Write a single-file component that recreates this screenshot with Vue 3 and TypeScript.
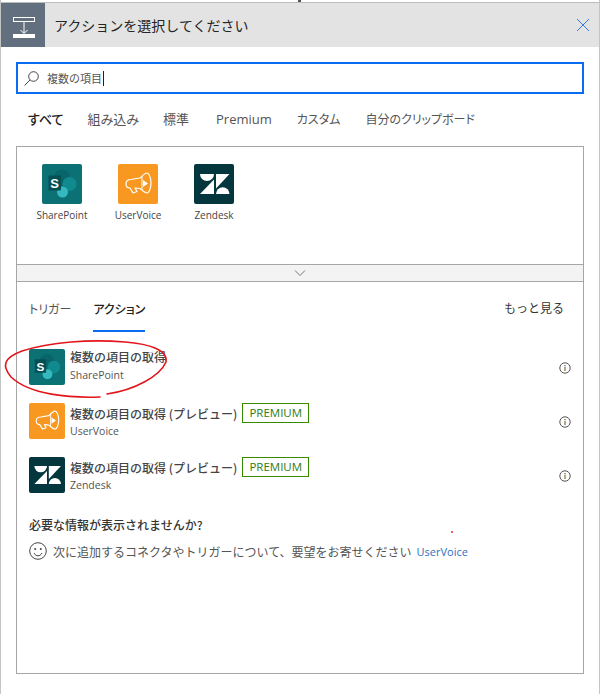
<script setup lang="ts">
interface Connector { name: string; kind: 'sp' | 'uv' | 'zd' }
interface ActionRow { title: string; connector: Connector; premium: boolean }

const sp: Connector = { name: 'SharePoint', kind: 'sp' }
const uv: Connector = { name: 'UserVoice', kind: 'uv' }
const zd: Connector = { name: 'Zendesk', kind: 'zd' }

const connectors: Connector[] = [sp, uv, zd]
const tabs = ['すべて', '組み込み', '標準', 'Premium', 'カスタム', '自分のクリップボード']
const rows: ActionRow[] = [
  { title: '複数の項目の取得', connector: sp, premium: false },
  { title: '複数の項目の取得 (プレビュー)', connector: uv, premium: true },
  { title: '複数の項目の取得 (プレビュー)', connector: zd, premium: true },
]
</script>

<template>
  <div class="page">
    <svg class="defs" width="0" height="0" aria-hidden="true">
      <symbol id="logo-sp" viewBox="0 0 40 40">
        <circle cx="20" cy="13.500" r="8" fill="#08656a" />
        <circle cx="27.500" cy="20" r="7" fill="#118a8e" />
        <circle cx="20.500" cy="28" r="5.500" fill="#35b8be" />
        <rect x="6.500" y="11.500" width="12.500" height="15" rx="1" fill="#034f54" />
      </symbol>
      <symbol id="logo-uv" viewBox="0 0 40 40">
        <path d="M8 20C8 17 10 15.500 13 15.500L22 14C25 11 28 9 29 9C31 9 33 14 33 19C33 24 31 29 29 29C27 29 25 27 22 24.500L17 24L19 27.500L15 29L12 24C9 24 8 22.500 8 20z" fill="none" stroke="#fff" stroke-width="1.200" stroke-linejoin="round" />
        <path d="M24 12v14" stroke="#fff" stroke-width="1" fill="none" />
        <path d="M25 16v7l5-3.500z" fill="#fff" />
      </symbol>
      <symbol id="logo-zd" viewBox="0 0 40 40">
        <path d="M6 10h14a7 7 0 0 1-14 0z" fill="#fff" />
        <path d="M20 15.500V30H6z" fill="#fff" />
        <path d="M22 10h13.500L22 24.500z" fill="#fff" />
        <path d="M22 30a6.750 6.750 0 0 1 13.500 0z" fill="#fff" />
      </symbol>
    </svg>

    <header class="head">
      <div class="head-icon">
        <svg width="44" height="44" viewBox="0 0 44 44">
          <rect x="12.500" y="14.500" width="21" height="4" fill="none" stroke="#fff" />
          <path d="M23 19v11M19.500 27l3.500 3.500 3.500-3.500" fill="none" stroke="#fff" />
          <rect x="12" y="31" width="22" height="4" fill="#fff" />
        </svg>
      </div>
      <div class="head-title">アクションを選択してください</div>
      <svg class="close" width="14" height="14" viewBox="0 0 14 14">
        <path d="M1 1l12 12M13 1L1 13" stroke="#3b78e7" stroke-width="1" fill="none" />
      </svg>
    </header>

    <div class="search">
      <svg width="17" height="17" viewBox="0 0 17 17">
        <circle cx="10.500" cy="6.500" r="4.800" fill="none" stroke="#444" />
        <path d="M7 10l-5.500 5.500" stroke="#444" fill="none" />
      </svg>
      <span class="search-text">複数の項目</span><span class="caret"></span>
    </div>

    <nav class="tabs">
      <span v-for="(t, i) in tabs" :key="t" class="tab" :class="{ on: i === 0 }">{{ t }}</span>
    </nav>

    <section class="panel">
      <div class="conn-grid">
        <div v-for="c in connectors" :key="c.name" class="conn">
          <div class="logo big" :class="c.kind">
            <svg width="40" height="40" viewBox="0 0 40 40">
              <use :href="`#logo-${c.kind}`" />
              <text v-if="c.kind === 'sp'" x="12.700" y="24" class="s-letter">S</text>
            </svg>
          </div>
          <div class="conn-name">{{ c.name }}</div>
        </div>
      </div>

      <div class="collapse">
        <svg width="12" height="8" viewBox="0 0 12 8">
          <path d="M1 1.500l5 5 5-5" fill="none" stroke="#777" />
        </svg>
      </div>

      <div class="sub-tabs">
        <span class="sub-tab">トリガー</span>
        <span class="sub-tab on">アクション</span>
        <span class="more">もっと見る</span>
      </div>

      <ul class="rows">
        <li v-for="r in rows" :key="r.connector.name" class="row">
          <div class="logo small" :class="r.connector.kind">
            <svg width="36" height="36" viewBox="0 0 40 40">
              <use :href="`#logo-${r.connector.kind}`" />
              <text v-if="r.connector.kind === 'sp'" x="12.700" y="24" class="s-letter">S</text>
            </svg>
          </div>
          <div class="row-text" :class="{ plain: !r.premium }">
            <div class="row-title">
              <span>{{ r.title }}</span>
              <span v-if="r.premium" class="badge">PREMIUM</span>
            </div>
            <div class="row-sub">{{ r.connector.name }}</div>
          </div>
          <svg class="info" width="12" height="12" viewBox="0 0 12 12">
            <circle cx="6" cy="6" r="5.200" fill="none" stroke="#555" />
            <path d="M6 5v4" stroke="#8a6a30" stroke-width="1.200" />
            <path d="M6 3v1.200" stroke="#555" stroke-width="1.200" />
          </svg>
        </li>
      </ul>

      <div class="missing">
        <div class="missing-title">必要な情報が表示されませんか?</div>
        <div class="missing-line">
          <svg width="18" height="18" viewBox="0 0 18 18">
            <circle cx="9" cy="9" r="8.300" fill="none" stroke="#444" />
            <circle cx="6.200" cy="7" r="1" fill="#444" />
            <circle cx="11.800" cy="7" r="1" fill="#444" />
            <path d="M5 11c1 2 2.500 2.800 4 2.800s3-.8 4-2.800" fill="none" stroke="#444" />
          </svg>
          <span>次に追加するコネクタやトリガーについて、要望をお寄せください</span>
          <a class="link">UserVoice</a>
        </div>
      </div>
    </section>

    <svg class="scribble" width="600" height="694" viewBox="0 0 600 694">
      <path d="M100 397C70 398 30 395 11 377C2 366 3 358 22 351C50 342 90 339 125 342C150 344 168 350 166 362C160 376 135 390 107 394" fill="none" stroke="#e2161c" stroke-width="1.600" stroke-linecap="round" />
      <circle cx="452" cy="532" r="0.900" fill="#e2161c" />
      <rect x="298" y="0" width="3" height="2" fill="#555" />
    </svg>
  </div>
</template>

<style>
html, body { margin: 0; background: #fff; }
</style>

<style scoped>
.page {
  position: relative;
  width: 600px;
  height: 694px;
  box-sizing: border-box;
  padding-top: 2px;
  overflow: hidden;
  background: #fff;
  color: #333;
  font-family: "Noto Sans CJK JP", "Liberation Sans", sans-serif;
  border-left: 1px solid #c4c4c4;
  border-right: 1px solid #c4c4c4;
}
.defs { position: absolute; }
.head {
  display: flex;
  align-items: center;
  height: 45px;
  background: #e3e3e3;
  border-top: 1px solid #bcbcbc;
  box-sizing: border-box;
}
.head-icon {
  width: 44px;
  height: 44px;
  background: #626f7e;
  flex: none;
}
.head-icon svg { display: block; }
.head-title {
  margin-left: 9px;
  font-size: 14px;
  color: #252525;
  flex: 1;
}
.close { margin-right: 9px; }
.search {
  display: flex;
  align-items: center;
  margin: 15px 15px 0;
  width: 568px;
  height: 32px;
  box-sizing: border-box;
  border: 2px solid #0a6cf0;
  padding-left: 5px;
}
.search-text {
  margin-left: 7px;
  font-size: 11px;
  color: #555;
}
.caret {
  display: inline-block;
  width: 1px;
  height: 15px;
  margin-left: 1px;
  background: #222;
}
.tabs {
  display: flex;
  margin: 12px 0 0 27px;
  height: 25px;
  align-items: center;
  font-feature-settings: "palt";
}
.tab {
  font-size: 13px;
  color: #555;
  margin-right: 24px;
  line-height: 20px;
}
.tab:nth-child(1) { color: #222; font-weight: 500; }
.tab:nth-child(4) { margin-left: 3px; margin-right: 25px; font-family: "Open Sans", "Liberation Sans", sans-serif; }
.tab:nth-child(5), .tab:nth-child(6) { font-size: 12px; }
.tab:nth-child(5) { margin-right: 25px; }
.panel {
  margin: 15px 15px 0;
  width: 568px;
  height: 528px;
  box-sizing: border-box;
  border: 1px solid #a6a6a6;
  display: flex;
  flex-direction: column;
}
.conn-grid {
  display: flex;
  height: 117px;
  flex: none;
  padding: 17px 0 0 18px;
  box-sizing: border-box;
  gap: 22px;
}
.conn {
  display: flex;
  flex-direction: column;
  align-items: center;
  width: 54px;
}
.conn-name {
  margin-top: 3px;
  font-family: "Open Sans", "Liberation Sans", sans-serif;
  font-size: 10px;
  line-height: 16px;
  color: #444;
}
.logo {
  display: flex;
  align-items: center;
  justify-content: center;
  border-radius: 2px;
  flex: none;
}
.logo svg { display: block; }
.logo.big { width: 40px; height: 40px; }
.logo.small { width: 36px; height: 36px; }
.logo.sp { background: #0b7175; }
.logo.uv { background: #f99820; }
.logo.zd { background: #03363d; }
.s-letter {
  font-family: "Liberation Sans", sans-serif;
  font-weight: 700;
  font-size: 13px;
  fill: #fff;
  text-anchor: middle;
}
.collapse {
  height: 18px;
  flex: none;
  box-sizing: border-box;
  background: #f3f3f3;
  border-top: 1px solid #a6a6a6;
  border-bottom: 1px solid #a6a6a6;
  display: flex;
  align-items: center;
  justify-content: center;
}
.sub-tabs {
  display: flex;
  align-items: stretch;
  height: 50px;
  padding: 0 19px 0 12px;
  flex: none;
  font-feature-settings: "palt";
}
.sub-tab {
  font-size: 12px;
  color: #555;
  margin-right: 22px;
  line-height: 54px;
  height: 50px;
  box-sizing: border-box;
}
.sub-tab.on {
  color: #222;
  font-weight: 500;
  border-bottom: 2px solid #0a6cf0;
}
.more {
  margin-left: auto;
  font-size: 12px;
  color: #333;
  line-height: 52px;
  font-feature-settings: normal;
}
.rows {
  list-style: none;
  margin: 0;
  padding: 17px 0 0 12px;
}
.row {
  display: flex;
  align-items: center;
  height: 36px;
  margin-bottom: 18px;
}
.row-text { margin-left: 5px; flex: 1; }
.row-text.plain { margin-bottom: 5px; }
.row-title {
  display: flex;
  align-items: center;
  font-size: 12px;
  font-weight: 500;
  color: #444;
  height: 20px;
}
.row-sub {
  font-family: "Open Sans", "Liberation Sans", sans-serif;
  font-size: 10.500px;
  line-height: 16px;
  color: #555;
}
.badge {
  margin-left: 5px;
  box-sizing: border-box;
  height: 20px;
  width: 67px;
  border: 1px solid #3a8a00;
  color: #2e7d12;
  font-family: "Open Sans", "Liberation Sans", sans-serif;
  font-size: 11.500px;
  font-weight: 400;
  line-height: 18px;
  text-align: center;
}
.info { margin: 2px 12px 0 0; flex: none; }
.missing { padding: 5px 0 0 12px; }
.missing-title {
  font-size: 12px;
  font-weight: 500;
  color: #333;
  line-height: 18px;
}
.missing-line {
  display: flex;
  align-items: center;
  margin-top: 8px;
  font-size: 12px;
  color: #555;
}
.missing-line span { margin-left: 6px; }
.link {
  margin-left: 5px;
  color: #2f6fc0;
  font-family: "Open Sans", "Liberation Sans", sans-serif;
  font-size: 11px;
}
.scribble {
  position: absolute;
  left: -1px;
  top: 0;
  pointer-events: none;
}
</style>
